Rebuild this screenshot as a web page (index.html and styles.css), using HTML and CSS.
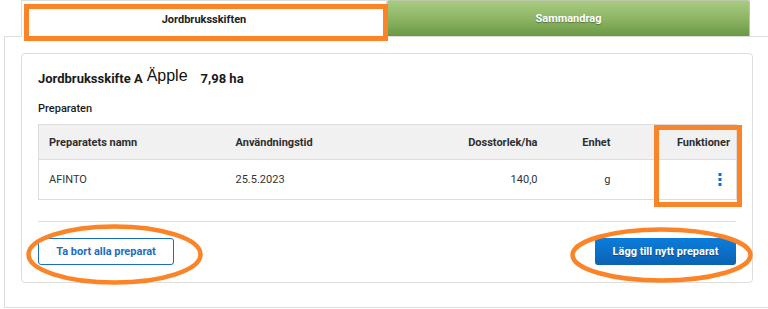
FILE: index.html
```html
<!DOCTYPE html>
<html lang="sv">
<head>
    <meta charset="UTF-8">
    <meta name="viewport" content="width=device-width, initial-scale=1.0">
    <title>Jordbruksskiften</title>
    <link rel="stylesheet" href="styles.css">
</head>
<body>
    <div class="page">
        <div class="tabs">
            <div class="tab tab-active">Jordbruksskiften</div>
            <div class="tab tab-summary">Sammandrag</div>
        </div>

        <div class="panel">
            <div class="card">
                <div class="field-title">
                    <span class="field-name">Jordbruksskifte A</span>
                    <span class="field-crop">Äpple</span>
                    <span class="field-area">7,98 ha</span>
                </div>

                <div class="section-label">Preparaten</div>

                <table class="prep-table">
                    <colgroup>
                        <col class="col-name">
                        <col class="col-date">
                        <col class="col-dose">
                        <col class="col-unit">
                        <col class="col-func">
                    </colgroup>
                    <thead>
                        <tr>
                            <th>Preparatets namn</th>
                            <th>Användningstid</th>
                            <th class="num">Dosstorlek/ha</th>
                            <th class="num">Enhet</th>
                            <th class="num func-head">Funktioner</th>
                        </tr>
                    </thead>
                    <tbody>
                        <tr>
                            <td>AFINTO</td>
                            <td>25.5.2023</td>
                            <td class="num">140,0</td>
                            <td class="num">g</td>
                            <td class="num">
                                <button class="kebab" aria-label="Funktioner">
                                    <svg width="4" height="13" viewBox="0 0 4 13">
                                        <rect x="0.5" y="0" width="3" height="3" fill="#0a6fd0"/>
                                        <rect x="0.5" y="5" width="3" height="3" fill="#0a6fd0"/>
                                        <rect x="0.5" y="10" width="3" height="3" fill="#0a6fd0"/>
                                    </svg>
                                </button>
                            </td>
                        </tr>
                    </tbody>
                </table>

                <hr class="divider">

                <div class="actions">
                    <button class="btn btn-outline">Ta bort alla preparat</button>
                    <button class="btn btn-primary">Lägg till nytt preparat</button>
                </div>
            </div>
        </div>

        <!-- annotation marks drawn on top of the screenshot -->
        <svg class="marks" width="768" height="309" viewBox="0 0 768 309">
            <rect x="26.5" y="6.5" width="359" height="32" fill="none" stroke="#fd8327" stroke-width="5"/>
            <rect x="656.5" y="127.5" width="83" height="77" fill="none" stroke="#fd8327" stroke-width="5"/>
            <ellipse cx="114.5" cy="254.5" rx="86" ry="28" fill="none" stroke="#fd8327" stroke-width="4.5"/>
            <ellipse cx="661.5" cy="255" rx="89" ry="25.5" fill="none" stroke="#fd8327" stroke-width="4.5"/>
        </svg>
    </div>
</body>
</html>
```

FILE: styles.css
```css
body {
    margin: 0;
    background: #ffffff;
    color: #333333;
    font-family: 'Roboto', 'Liberation Sans', sans-serif;
    font-size: 11px;
    overflow: hidden;
}

.page {
    position: relative;
    width: 768px;
    height: 309px;
}

.tabs {
    display: flex;
    padding-left: 21px;
    height: 37px;
    margin-bottom: -1px;
    position: relative;
    z-index: 1;
}

.tab {
    box-sizing: border-box;
    display: flex;
    align-items: center;
    justify-content: center;
    font-weight: 700;
    font-size: 11px;
}

.tab-active {
    width: 366px;
    height: 37px;
    background: #ffffff;
    border: 1px solid #dddddd;
    border-bottom: none;
    color: #222222;
}

.tab-summary {
    width: 363px;
    height: 37px;
    background: linear-gradient(180deg, #a9cb80 0%, #8db565 50%, #6a9944 100%);
    border: 1px solid #b9c9a8;
    border-bottom: 1px solid #dddddd;
    border-radius: 2px 2px 0 0;
    color: #ffffff;
    text-shadow: 0 1px 1px rgba(0, 0, 0, 0.35);
}

.panel {
    margin-left: 4px;
    border: 1px solid #dddddd;
    border-right: none;
    padding: 16px 0 24px 16px;
}

.card {
    box-sizing: border-box;
    width: 732px;
    border: 1px solid #dddddd;
    border-radius: 4px;
    padding: 14px 15px 17px 16px;
}

.field-title {
    display: flex;
    align-items: baseline;
    line-height: 20px;
    height: 20px;
}

.field-name {
    font-weight: 700;
    font-size: 13px;
    color: #1a1a1a;
}

.field-crop {
    font-family: 'Liberation Sans', Arial, sans-serif;
    font-size: 16px;
    color: #111111;
    margin-left: 4px;
    position: relative;
    top: -2px;
}

.field-area {
    font-weight: 700;
    font-size: 13px;
    color: #1a1a1a;
    margin-left: 13px;
}

.section-label {
    margin-top: 13px;
    line-height: 16px;
    font-weight: 500;
    color: #1a1a1a;
}

.prep-table {
    margin-top: 7px;
    width: 698px;
    border-collapse: collapse;
    table-layout: fixed;
}

.col-name { width: 187px; }
.col-date { width: 175px; }
.col-dose { width: 147px; }
.col-unit { width: 73px; }
.col-func { width: 116px; }

.prep-table th,
.prep-table td {
    border-top: 1px solid #dddddd;
    border-bottom: 1px solid #dddddd;
    padding: 0 10px;
    text-align: left;
    white-space: nowrap;
}

.prep-table th:first-child,
.prep-table td:first-child {
    border-left: 1px solid #dddddd;
}

.prep-table th:last-child,
.prep-table td:last-child {
    border-right: 1px solid #dddddd;
}

.prep-table th {
    height: 34px;
    background: #f1f1f1;
    font-weight: 700;
    color: #2e2e2e;
}

.prep-table td {
    height: 39px;
    color: #333333;
}

.prep-table .num {
    text-align: right;
}

.prep-table .func-head {
    padding-right: 6px;
}

.kebab {
    border: none;
    background: none;
    padding: 0;
    margin-right: 4px;
    cursor: pointer;
    display: inline-flex;
    vertical-align: middle;
}

.divider {
    margin: 21px 0 0;
    border: none;
    border-top: 1px solid #dddddd;
    width: 698px;
}

.actions {
    display: flex;
    justify-content: space-between;
    width: 698px;
    margin-top: 16px;
}

.btn {
    box-sizing: border-box;
    height: 27px;
    border-radius: 3px;
    font-family: 'Roboto', 'Liberation Sans', sans-serif;
    font-size: 11px;
    font-weight: 700;
    cursor: pointer;
}

.btn-outline {
    width: 136px;
    background: #ffffff;
    border: 1px solid #1a6ec2;
    color: #1a6ec2;
}

.btn-primary {
    width: 141px;
    background: linear-gradient(180deg, #0a7ddc 0%, #0b62b2 100%);
    border: none;
    color: #ffffff;
    text-shadow: 0 1px 1px rgba(0, 0, 0, 0.3);
}

.marks {
    position: absolute;
    left: 0;
    top: 0;
    z-index: 2;
    pointer-events: none;
}
```
